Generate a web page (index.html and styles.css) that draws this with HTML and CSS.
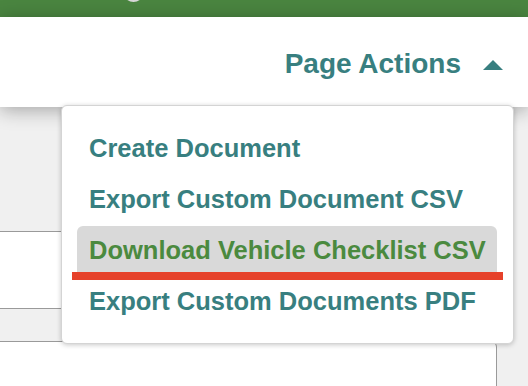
FILE: index.html
```html
<!DOCTYPE html>
<html lang="en">
<head>
    <meta charset="UTF-8">
    <meta name="viewport" content="width=device-width, initial-scale=1.0">
    <title>Page Actions</title>
    <link rel="stylesheet" href="styles.css">
</head>
<body>
    <div class="topbar">
        <span class="avatar"></span>
    </div>

    <header class="header">
        <div class="actions">
            <span class="actions-label">Page Actions</span>
            <span class="caret"></span>
        </div>

        <div class="menu">
            <a class="menu-item" href="#">Create Document</a>
            <a class="menu-item" href="#">Export Custom Document CSV</a>
            <a class="menu-item active" href="#">Download Vehicle Checklist CSV</a>
            <a class="menu-item" href="#">Export Custom Documents PDF</a>
            <span class="mark"></span>
        </div>
    </header>

    <main class="content">
        <div class="filler"></div>
        <div class="row"></div>
        <div class="spacer"></div>
        <div class="card"></div>
    </main>
</body>
</html>
```

FILE: styles.css
```css
* {
    box-sizing: border-box;
}
body {
    margin: 0;
    background-color: #f0f0f0;
    font-family: "Liberation Sans", Arial, sans-serif;
    overflow: hidden;
    height: 386px;
}
.topbar {
    height: 17px;
    background-color: #4a8540;
    overflow: hidden;
    display: flex;
    padding-left: 123px;
}
.avatar {
    width: 21px;
    height: 21px;
    border-radius: 50%;
    background-color: #d8d8d8;
    margin-top: -19px;
}
.header {
    position: relative;
    z-index: 2;
    height: 90px;
    background-color: #fff;
    box-shadow: 0 3px 18px rgba(0, 0, 0, 0.32);
    display: flex;
    justify-content: flex-end;
}
.actions {
    display: flex;
    align-items: center;
    gap: 22px;
    padding: 3px 25px 0 0;
    color: #387f80;
}
.actions-label {
    font-size: 28px;
    font-weight: bold;
}
.caret {
    width: 0;
    height: 0;
    margin-top: 2px;
    border-left: 10px solid transparent;
    border-right: 10px solid transparent;
    border-bottom: 10px solid #387f80;
}
.menu {
    position: absolute;
    left: 61px;
    top: 88px;
    width: 453px;
    padding: 18px 16px 18px 15px;
    background-color: #fff;
    border: 1px solid #d4d4d4;
    border-radius: 6px;
    box-shadow: 0 1px 5px rgba(0, 0, 0, 0.22);
    display: flex;
    flex-direction: column;
    gap: 3px;
}
.menu-item {
    display: block;
    height: 48px;
    line-height: 48px;
    padding-left: 12px;
    font-size: 25.5px;
    font-weight: bold;
    color: #387f80;
    text-decoration: none;
    white-space: nowrap;
    border-radius: 6px 6px 0 0;
}
.menu-item.active {
    background-color: #d9d9d9;
    color: #4b8a3f;
}
.mark {
    position: absolute;
    left: 10px;
    top: 166px;
    width: 431px;
    height: 8px;
    background-color: #e6412a;
}
.content {
    margin-left: -8px;
    width: 505px;
    display: flex;
    flex-direction: column;
}
.filler {
    height: 124px;
}
.row {
    height: 78px;
    background-color: #fff;
    border-top: 1px solid #9a9a9a;
    border-bottom: 1px solid #9a9a9a;
}
.spacer {
    height: 32px;
}
.card {
    height: 60px;
    background-color: #fff;
    border: 1px solid #9a9a9a;
    border-radius: 6px;
}
```
